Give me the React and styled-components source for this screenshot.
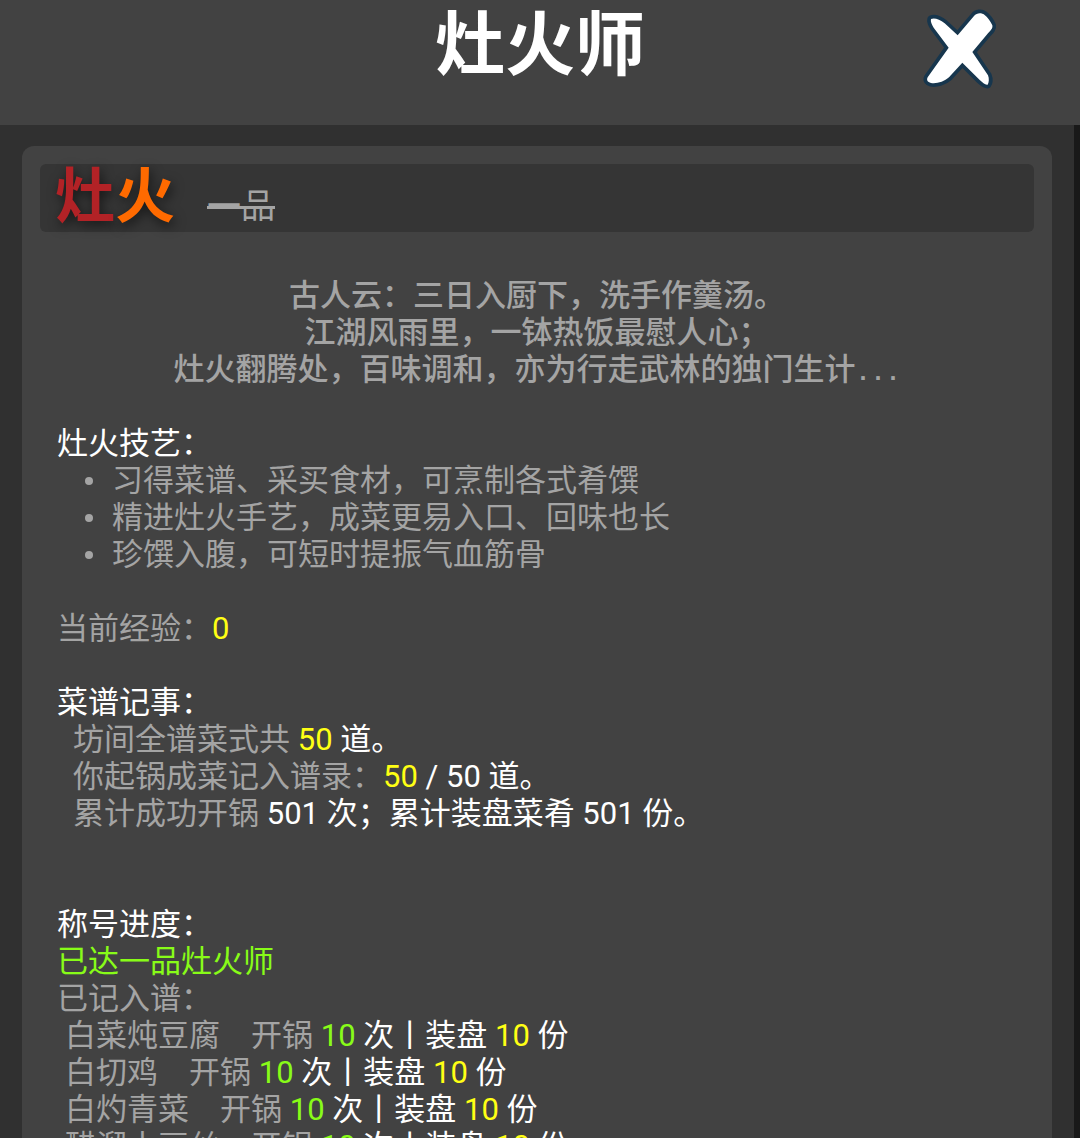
import React from "react";
import styled, { createGlobalStyle } from "styled-components";

const colors = {
  surface: "#424242",
  backdrop: "#303030",
  inset: "#353535",
  muted: "#a4a4a4",
  white: "#ffffff",
  yellow: "#ffff14",
  green: "#88fb18",
};

const GlobalStyle = createGlobalStyle`
  *, *::before, *::after { box-sizing: border-box; }
  body {
    margin: 0;
    background: ${colors.backdrop};
    font-family: Roboto, "Noto Sans CJK SC", sans-serif;
    font-size: 31px;
    line-height: 37px;
    color: ${colors.muted};
  }
`;

const Page = styled.div`
  display: flex;
  flex-direction: column;
  height: 100vh;
  overflow: hidden;
`;

const Header = styled.header`
  display: grid;
  grid-template-columns: 1fr auto 1fr;
  align-items: start;
  flex: none;
  height: 125px;
  background: ${colors.surface};
`;

const Title = styled.h1`
  grid-column: 2;
  margin: 0;
  font-size: 70px;
  font-weight: 700;
  line-height: 92px;
  color: ${colors.white};
`;

const CloseButton = styled.button`
  justify-self: end;
  display: block;
  margin: 6px 80px 0 0;
  padding: 0;
  border: 0;
  background: none;
  cursor: pointer;

  svg { display: block; }
`;

const Body = styled.main`
  flex: 1;
  min-height: 0;
  overflow: hidden;
  padding: 21px 22px 0;
  border-right: 6px solid #191919;
`;

const Card = styled.article`
  padding: 18px;
  border-radius: 12px;
  background: ${colors.surface};
`;

const RankBar = styled.div`
  display: flex;
  align-items: center;
  gap: 32px;
  height: 68px;
  padding: 0 15px;
  border-radius: 6px;
  background: ${colors.inset};
`;

const Emblem = styled.strong`
  font-size: 60px;
  font-weight: 700;
  line-height: 68px;
  text-shadow: 2px 4px 12px rgba(0, 0, 0, 0.6);
`;

const Tone = styled.span`
  color: ${(p) => p.$color};
`;

const Rank = styled.s`
  padding-top: 16px;
  font-size: 34px;
  text-decoration-thickness: 3px;
`;

const Poem = styled.p`
  margin: 45px 0 37px;
  text-align: center;
  font-weight: 500;
`;

const Dots = styled.span`
  font-family: "Liberation Mono", monospace;
  font-size: 25px;
  font-weight: 700;
  line-height: 1;
`;

const Section = styled.section`
  margin-bottom: ${(p) => p.$gap || 37}px;
  padding: 0 17px;
`;

const Heading = styled.h2`
  margin: 0;
  font-size: 31px;
  font-weight: 400;
  color: ${colors.white};
`;

const SkillList = styled.ul`
  margin: 0;
  padding: 0;
  list-style: none;
`;

const Skill = styled.li`
  display: flex;
  align-items: center;
  gap: 19px;
  padding-left: 28px;

  &::before {
    content: "";
    width: 8px;
    height: 8px;
    border-radius: 50%;
    background: ${colors.muted};
  }
`;

const Line = styled.p`
  margin: 0;
  padding-left: ${(p) => p.$indent || 0}px;
  white-space: nowrap;
`;

/* Full-width punctuation and the ideographic space */
const COMMA = "\uFF0C";
const COLON = "\uFF1A";
const SEMICOLON = "\uFF1B";
const WIDE_SPACE = "\u3000";

const dishes = [
  ["白菜炖豆腐", 10, 10],
  ["白切鸡", 10, 10],
  ["白灼青菜", 10, 10],
  ["醋溜土豆丝", 10, 10],
];

const skills = [
  `习得菜谱、采买食材${COMMA}可烹制各式肴馔`,
  `精进灶火手艺${COMMA}成菜更易入口、回味也长`,
  `珍馔入腹${COMMA}可短时提振气血筋骨`,
];

function CloseIcon() {
  return (
    <svg width="80" height="85" viewBox="60 18 240 255" aria-hidden="true">
      <path
        d="M93 57C103 52 119 58 134 70L173 106L222 48C230 38 244 37 253 44C264 53 272 64 277 76C279 85 272 92 264 100L217 156L264 226C268 236 267 248 263 254C256 256 248 248 240 241L187 188L147 232C132 246 108 252 93 249C82 246 79 240 83 232L146 143L101 83C95 74 91 64 93 57Z"
        fill="#fff"
        stroke="#17364d"
        strokeWidth="22"
        strokeLinejoin="round"
        paintOrder="stroke"
      />
    </svg>
  );
}

function Dish({ name, cooked, plated }) {
  return (
    <Line $indent={8}>
      {name + WIDE_SPACE}开锅{" "}
      <Tone $color={colors.green}>{cooked}</Tone>
      <Tone $color={colors.white}> 次丨装盘 </Tone>
      <Tone $color={colors.yellow}>{plated}</Tone>
      <Tone $color={colors.white}> 份</Tone>
    </Line>
  );
}

export default function App() {
  return (
    <Page>
      <GlobalStyle />
      <Header>
        <Title>灶火师</Title>
        <CloseButton type="button" aria-label="关闭">
          <CloseIcon />
        </CloseButton>
      </Header>
      <Body>
        <Card>
          <RankBar>
            <Emblem>
              <Tone $color="#b22226">灶</Tone>
              <Tone $color="#ff6a00">火</Tone>
            </Emblem>
            <Rank>一品</Rank>
          </RankBar>

          <Poem>
            {`古人云${COLON}三日入厨下${COMMA}洗手作羹汤。`}
            <br />
            {`江湖风雨里${COMMA}一钵热饭最慰人心${SEMICOLON}`}
            <br />
            {`灶火翻腾处${COMMA}百味调和${COMMA}亦为行走武林的独门生计`}
            <Dots>...</Dots>
          </Poem>

          <Section>
            <Heading>{`灶火技艺${COLON}`}</Heading>
            <SkillList>
              {skills.map((text) => (
                <Skill key={text}>{text}</Skill>
              ))}
            </SkillList>
          </Section>

          <Section>
            <Line>
              {`当前经验${COLON}`}
              <Tone $color={colors.yellow}>0</Tone>
            </Line>
          </Section>

          <Section $gap={74}>
            <Heading>{`菜谱记事${COLON}`}</Heading>
            <Line $indent={16}>
              坊间全谱菜式共 <Tone $color={colors.yellow}>50</Tone>
              <Tone $color={colors.white}> 道。</Tone>
            </Line>
            <Line $indent={16}>
              {`你起锅成菜记入谱录${COLON}`}
              <Tone $color={colors.yellow}>50</Tone>
              <Tone $color={colors.white}> / 50 道。</Tone>
            </Line>
            <Line $indent={16}>
              累计成功开锅{" "}
              <Tone $color={colors.white}>{`501 次${SEMICOLON}累计装盘菜肴 501 份。`}</Tone>
            </Line>
          </Section>

          <Section>
            <Heading>{`称号进度${COLON}`}</Heading>
            <Line>
              <Tone $color={colors.green}>已达一品灶火师</Tone>
            </Line>
            <Line>{`已记入谱${COLON}`}</Line>
            {dishes.map(([name, cooked, plated]) => (
              <Dish key={name} name={name} cooked={cooked} plated={plated} />
            ))}
          </Section>
        </Card>
      </Body>
    </Page>
  );
}
